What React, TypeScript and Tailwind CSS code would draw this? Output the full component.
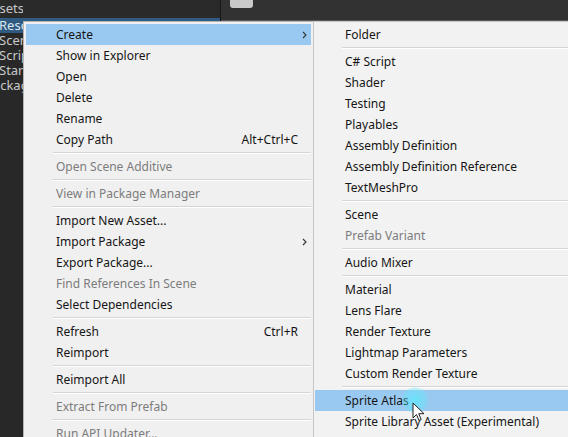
import React from 'react';

type Item =
  | { sep: true }
  | { label: string; shortcut?: string; sub?: boolean; disabled?: boolean; active?: boolean };

const mainItems: Item[] = [
  { label: 'Create', sub: true, active: true },
  { label: 'Show in Explorer' },
  { label: 'Open' },
  { label: 'Delete' },
  { label: 'Rename' },
  { label: 'Copy Path', shortcut: 'Alt+Ctrl+C' },
  { sep: true },
  { label: 'Open Scene Additive', disabled: true },
  { sep: true },
  { label: 'View in Package Manager', disabled: true },
  { sep: true },
  { label: 'Import New Asset...' },
  { label: 'Import Package', sub: true },
  { label: 'Export Package...' },
  { label: 'Find References In Scene', disabled: true },
  { label: 'Select Dependencies' },
  { sep: true },
  { label: 'Refresh', shortcut: 'Ctrl+R' },
  { label: 'Reimport' },
  { sep: true },
  { label: 'Reimport All' },
  { sep: true },
  { label: 'Extract From Prefab', disabled: true },
  { sep: true },
  { label: 'Run API Updater...', disabled: true },
];

const createItems: Item[] = [
  { label: 'Folder' },
  { sep: true },
  { label: 'C# Script' },
  { label: 'Shader', sub: true },
  { label: 'Testing', sub: true },
  { label: 'Playables', sub: true },
  { label: 'Assembly Definition' },
  { label: 'Assembly Definition Reference' },
  { label: 'TextMeshPro', sub: true },
  { sep: true },
  { label: 'Scene' },
  { label: 'Prefab Variant', disabled: true },
  { sep: true },
  { label: 'Audio Mixer' },
  { sep: true },
  { label: 'Material' },
  { label: 'Lens Flare' },
  { label: 'Render Texture' },
  { label: 'Lightmap Parameters' },
  { label: 'Custom Render Texture' },
  { sep: true },
  { label: 'Sprite Atlas', active: true },
  { label: 'Sprite Library Asset (Experimental)' },
  { label: 'Sprites', sub: true },
];

function Chevron() {
  return (
    <svg width="5" height="8" viewBox="0 0 5 8" fill="none">
      <path d="M1 1l3 3-3 3" stroke="#333" strokeWidth="1.1" />
    </svg>
  );
}

function MenuRows({ items, showSub }: { items: Item[]; showSub: boolean }) {
  return (
    <>
      {items.map((it, i) =>
        'sep' in it ? (
          <div key={i} className="h-[6px] flex items-center pl-[27px]">
            <div className="flex-1 h-[2px] border-t border-[#d5d5d5] border-b-white border-b" />
          </div>
        ) : (
          <div
            key={i}
            className={`h-[21px] flex items-center pl-[30px] ${it.active ? 'bg-[#99c9f0]' : ''} ${
              it.disabled ? 'text-[#7c7c7c]' : 'text-[#151515]'
            }`}
          >
            <span className="flex-1 whitespace-nowrap">{it.label}</span>
            {it.shortcut && <span className="whitespace-nowrap">{it.shortcut}</span>}
            <span className="w-[13px] flex justify-center">{showSub && it.sub ? <Chevron /> : null}</span>
          </div>
        )
      )}
    </>
  );
}

// the project tree only shows its first few pixels left of the menu
const tree = ['Resources', 'Scenes', 'Scripts', 'Standard Assets'];

export default function App() {
  return (
    <div
      className="relative w-[568px] h-[437px] overflow-hidden bg-[#282828] text-[12px]"
      style={{ fontFamily: '"Noto Sans", "Liberation Sans", sans-serif' }}
    >
      {/* editor behind the menu */}
      <div className="flex h-full">
        <div className="w-[220px] flex flex-col text-[13px] text-[#c8c8c8]">
          <div className="h-[18px] bg-[#2a2a2a] overflow-hidden">
            <div className="w-[23px] overflow-hidden flex">
              <span className="-ml-[15px] whitespace-nowrap leading-[17px]">Assets</span>
            </div>
          </div>
          {tree.map((t, i) => (
            <div key={t} className={`h-[15px] ${i === 0 ? 'bg-[#2f5a82] text-[#dde6ee]' : ''}`}>
              <div className="w-[23px] overflow-hidden flex">
                <span className="-ml-[1px] whitespace-nowrap leading-[15px]">{t}</span>
              </div>
            </div>
          ))}
          <div className="h-[15px]">
            <div className="w-[23px] overflow-hidden flex">
              <span className="-ml-[15px] whitespace-nowrap leading-[15px]">Packages</span>
            </div>
          </div>
        </div>
        <div className="w-px bg-[#161616]" />
        <div className="flex-1 flex flex-col">
          <div className="h-[21px] bg-[#323232] border-b border-[#5a5a5a] px-[9px]">
            <div className="w-[23px] h-[8px] rounded-b-[3px] bg-[#c9c9c9]" />
          </div>
        </div>
      </div>

      {/* context menu */}
      <div className="absolute left-[23px] top-[21px] w-[291px] bg-[#f0f0f0] border border-[#b4b4b4] p-[2px]">
        <MenuRows items={mainItems} showSub />
      </div>

      {/* create submenu */}
      <div className="absolute left-[313px] top-[21px] w-[300px] bg-[#f2f2f2] border border-[#c6c6c6] py-[2px] px-[1px]">
        <MenuRows items={createItems} showSub={false} />
      </div>

      {/* click highlight + cursor */}
      <div className="absolute left-[402px] top-[387px] w-[26px] h-[26px] rounded-full bg-[radial-gradient(circle,rgba(90,235,255,0.75)_0%,rgba(90,235,255,0.35)_55%,rgba(90,235,255,0)_100%)]" />
      <svg className="absolute left-[412px] top-[402px]" width="13" height="20" viewBox="0 0 13 20">
        <path d="M1 1v15l3.5-3.5 2.5 6 2.2-1-2.5-5.8H12z" fill="#fff" stroke="#222" strokeWidth="1" strokeLinejoin="round" />
      </svg>
    </div>
  );
}
